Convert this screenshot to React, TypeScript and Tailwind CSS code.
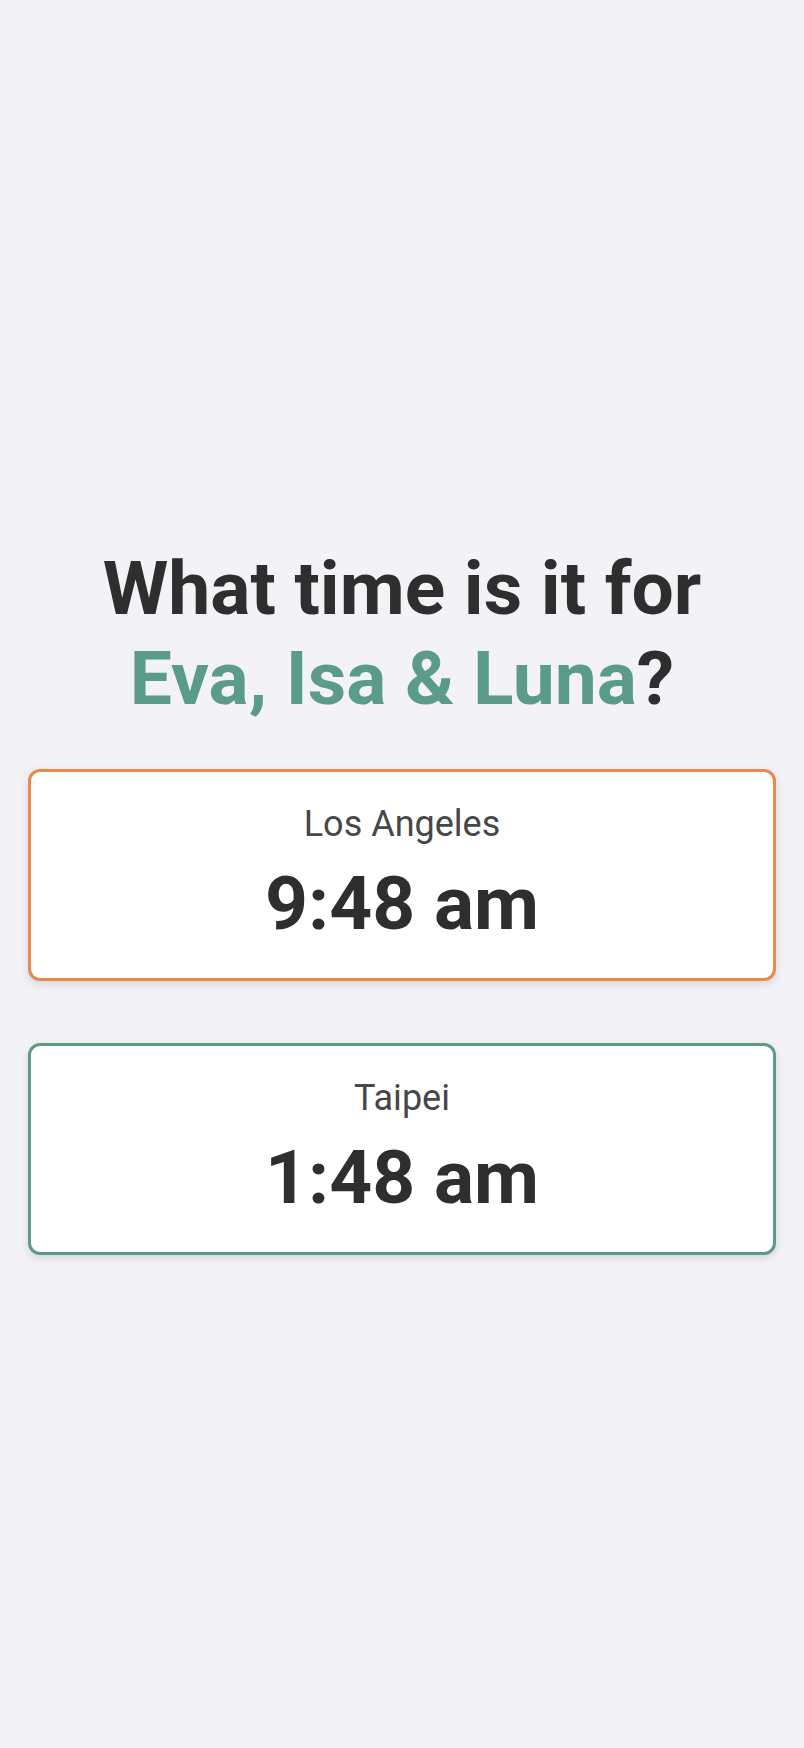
import React from 'react';

interface Zone {
  city: string;
  time: string;
  border: string;
}

const zones: Zone[] = [
  { city: 'Los Angeles', time: '9:48 am', border: 'border-[#e8894f]' },
  { city: 'Taipei', time: '1:48 am', border: 'border-[#5a9b89]' },
];

function ZoneCard({ zone }: { zone: Zone }) {
  return (
    <div
      className={`bg-white border-[3px] ${zone.border} rounded-[12px] shadow-[0_3px_8px_rgba(0,0,0,0.12)] pt-[28px] pb-[30px] flex flex-col items-center`}
    >
      <div className="text-[36px] leading-[48px] text-[#474747]">{zone.city}</div>
      <div className="mt-[10px] text-[75px] leading-[90px] font-bold text-[#2e2e2e]">{zone.time}</div>
    </div>
  );
}

export default function App() {
  return (
    <div
      className="min-h-screen bg-[#f2f2f7] pt-[543px] pb-10"
      style={{ fontFamily: 'Roboto, "Noto Sans", sans-serif' }}
    >
      <h1 className="text-center text-[75px] leading-[90px] font-bold text-[#2e2e2e]">
        What time is it for
        <br />
        <span className="text-[#5a9b89]">Eva, Isa &amp; Luna</span>?
      </h1>
      <div className="mx-[28px] mt-[46px] flex flex-col gap-[62px]">
        {zones.map((z) => (
          <ZoneCard key={z.city} zone={z} />
        ))}
      </div>
    </div>
  );
}
